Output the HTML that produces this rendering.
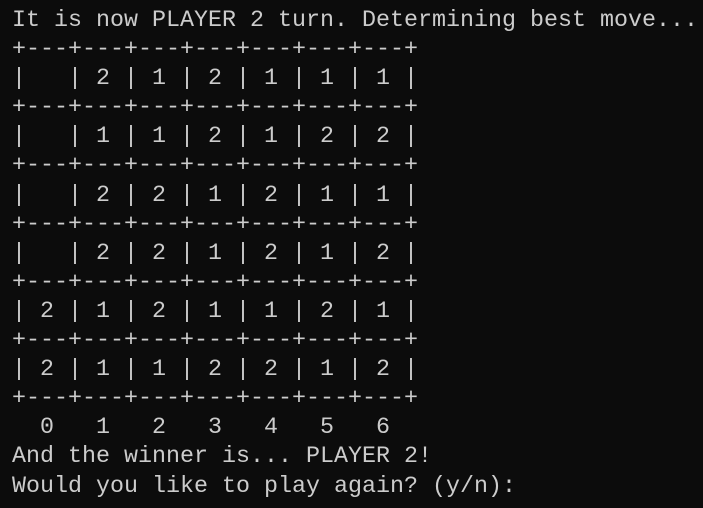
<!DOCTYPE html>
<html><head><style>
html,body{margin:0;padding:0;background:#0c0c0c;width:703px;height:508px;overflow:hidden}
pre{margin:0;position:absolute;left:12px;top:7px;font-family:"Liberation Mono",monospace;font-size:23.33px;line-height:29.1px;color:#cccccc;white-space:pre}
</style></head><body><pre>It is now PLAYER 2 turn. Determining best move...
+---+---+---+---+---+---+---+
|   | 2 | 1 | 2 | 1 | 1 | 1 |
+---+---+---+---+---+---+---+
|   | 1 | 1 | 2 | 1 | 2 | 2 |
+---+---+---+---+---+---+---+
|   | 2 | 2 | 1 | 2 | 1 | 1 |
+---+---+---+---+---+---+---+
|   | 2 | 2 | 1 | 2 | 1 | 2 |
+---+---+---+---+---+---+---+
| 2 | 1 | 2 | 1 | 1 | 2 | 1 |
+---+---+---+---+---+---+---+
| 2 | 1 | 1 | 2 | 2 | 1 | 2 |
+---+---+---+---+---+---+---+
  0   1   2   3   4   5   6
And the winner is... PLAYER 2!
Would you like to play again? (y/n):</pre></body></html>
